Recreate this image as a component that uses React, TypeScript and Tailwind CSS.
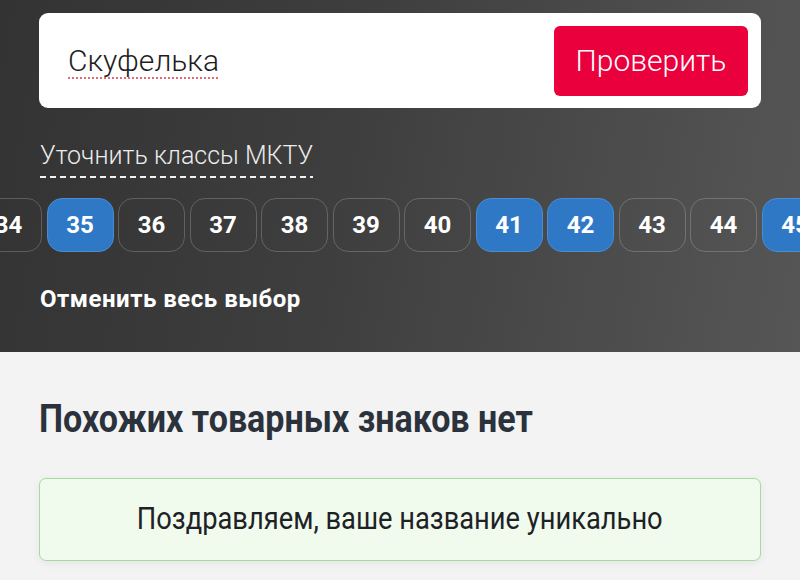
import React from "react";

const classes = [34, 35, 36, 37, 38, 39, 40, 41, 42, 43, 44, 45];
const selected = new Set([35, 41, 42, 45]);

function ClassChip({ n }: { n: number }) {
  const on = selected.has(n);
  return (
    <button
      className={`flex h-[54px] w-[67px] shrink-0 items-center justify-center rounded-[15px] border-[1.5px] text-[24px] font-bold text-white ${
        on ? "border-[#4a8cd2] bg-[#2f78c6]" : "border-white/20 bg-transparent"
      }`}
    >
      {n}
    </button>
  );
}

export default function App() {
  return (
    <div className="h-[580px] w-[800px] overflow-hidden font-['Roboto',sans-serif]">
      <section className="h-[352px] bg-[linear-gradient(100deg,#333333_0%,#3d3d3d_40%,#565656_100%)] pt-[13px]">
        <div className="mx-[39px] flex h-[95px] items-center justify-between rounded-[9px] bg-white pl-[29px] pr-[13px]">
          <span className="text-[30px] font-light text-[#1d1d1d] underline decoration-[#e06a7a] decoration-dotted decoration-2 underline-offset-[6px]">
            Скуфелька
          </span>
          <button className="flex h-[70px] w-[194px] items-center justify-center rounded-[6px] bg-[#e9003c] text-[30px] font-light text-white">
            Проверить
          </button>
        </div>

        <div className="mt-[33px] px-[40px]">
          <div className="inline-flex flex-col gap-[5px]">
            <span className="text-[25px] font-light leading-[30px] text-[#ececec]">
              Уточнить классы МКТУ
            </span>
            <div className="h-[2px] w-full bg-[repeating-linear-gradient(90deg,#f2f2f2_0px,#f2f2f2_6px,transparent_6px,transparent_10px)]" />
          </div>
        </div>

        <div className="mt-[20px] ml-[-25px] flex gap-[4.5px]">
          {classes.map((n) => (
            <ClassChip key={n} n={n} />
          ))}
        </div>

        <div className="mt-[32px] px-[40px] text-[24px] font-bold leading-[30px] tracking-[0.5px] text-white">
          Отменить весь выбор
        </div>
      </section>

      <section className="h-[228px] bg-[#f3f3f3] px-[39px] pt-[43px]">
        <h2 className="origin-left scale-x-[0.873] whitespace-nowrap text-[39px] font-bold leading-[48px] text-[#2b323b]">
          Похожих товарных знаков нет
        </h2>
        <div className="mt-[35px] flex h-[83px] items-center justify-center rounded-[7px] border-[1.5px] border-[#a6dba0] bg-[#f0fbee] shadow-[0_2px_10px_rgba(0,0,0,0.06)]">
          <span className="inline-block scale-x-[0.88] whitespace-nowrap text-[31px] text-[#1e2226]">
            Поздравляем, ваше название уникально
          </span>
        </div>
      </section>
    </div>
  );
}
